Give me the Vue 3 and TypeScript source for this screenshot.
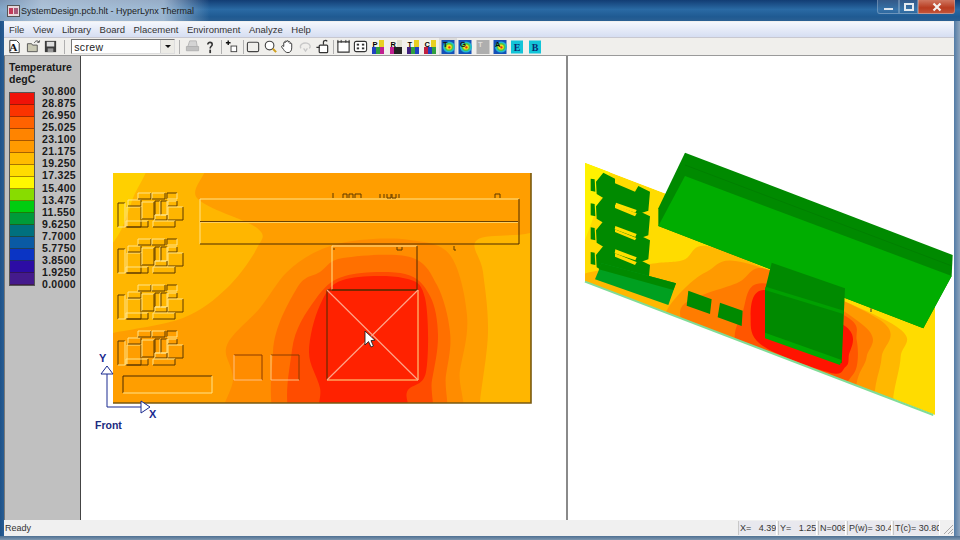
<template>
  <div class="window">
    <div class="titlebar">
      <div class="glow"></div>
      <svg class="app-icon" width="13" height="12" viewBox="0 0 13 12">
        <rect x="0.5" y="0.5" width="12" height="11" fill="#e8d8dc" stroke="#555" />
        <rect x="2" y="3" width="4" height="6" fill="#c23a5a" />
        <rect x="7" y="3" width="4" height="6" fill="#a85a7a" />
      </svg>
      <span class="title-text">SystemDesign.pcb.hlt - HyperLynx Thermal</span>
      <div class="win-buttons">
        <div class="win-btn min"><i></i></div>
        <div class="win-btn max"><i></i></div>
        <div class="win-btn close">
          <svg width="12" height="10" viewBox="0 0 12 10">
            <path d="M2.5 1.5 L9.5 8.5 M9.5 1.5 L2.5 8.5" stroke="#f4f0ee" stroke-width="2.2" />
          </svg>
        </div>
      </div>
    </div>

    <div class="client">
      <div class="menubar">
        <span v-for="m in menus" :key="m">{{ m }}</span>
      </div>

      <div class="toolbar">
        <div class="tb">
          <svg width="15" height="15" viewBox="0 0 16 16">
            <path d="M3 1.5 H10 L13 4.5 V14.5 H3 Z" fill="#fff" stroke="#333" />
            <text x="2.5" y="13" class="tb-letter">A</text>
          </svg>
        </div>
        <div class="tb gap-left">
          <svg width="15" height="15" viewBox="0 0 16 16">
            <path d="M1.5 13.5 V5 H6 L7 6.5 H12 V13.5 Z" fill="#c9c9b4" stroke="#555" />
            <path d="M9 4 C10 1.5 13 1.5 14 3.5 M14 3.5 L14.5 1.5 M14 3.5 L12 3.5" fill="none" stroke="#444" />
          </svg>
        </div>
        <div class="tb">
          <svg width="15" height="15" viewBox="0 0 16 16">
            <rect x="2" y="2" width="12" height="12" fill="#3c3c3c" />
            <rect x="4" y="3" width="8" height="5" fill="#ddd" />
            <rect x="5" y="10" width="6" height="4" fill="#999" />
          </svg>
        </div>
        <div class="sep first"></div>
        <div class="combo">
          <span>screw</span>
          <div class="combo-arrow"><i></i></div>
        </div>
        <div class="sep second"></div>
        <div class="tb">
          <svg width="15" height="15" viewBox="0 0 16 16">
            <path d="M5 2 H12 L13 8 H3 Z" fill="#d4d4d4" stroke="#b4b4b4" />
            <path d="M1.5 8 H14.5 V12.5 H1.5 Z" fill="#c0c0c0" stroke="#b0b0b0" />
          </svg>
        </div>
        <div class="tb">
          <svg width="14" height="14" viewBox="0 0 16 16">
            <path d="M5.5 5 C5.5 2 10.5 2 10.5 5 C10.5 7.2 8.2 7.2 8.2 9.6" fill="none" stroke="#333" stroke-width="1.8" />
            <path d="M8.2 11 V15" stroke="#333" stroke-width="2" />
          </svg>
        </div>
        <div class="sep third"></div>
        <div class="tb">
          <svg width="15" height="15" viewBox="0 0 16 16">
            <path d="M2 4 H7 M4.5 1.5 V6.5" stroke="#111" stroke-width="1.5" />
            <rect x="7.5" y="7.5" width="6" height="6" fill="#fff" stroke="#444" />
          </svg>
        </div>
        <div class="sep fourth"></div>
        <div class="tb">
          <svg width="15" height="15" viewBox="0 0 16 16">
            <rect x="1.5" y="3.5" width="12" height="10" rx="1.5" fill="none" stroke="#444" stroke-width="1.2" />
          </svg>
        </div>
        <div class="tb">
          <svg width="15" height="15" viewBox="0 0 16 16">
            <circle cx="7" cy="7" r="4.6" fill="#fff" stroke="#444" stroke-width="1.2" />
            <path d="M10.5 10.5 L14 14" stroke="#d0a020" stroke-width="2.2" />
          </svg>
        </div>
        <div class="tb">
          <svg width="15" height="15" viewBox="0 0 16 16">
            <path d="M4 8 V4 C4 3 5.5 3 5.5 4 V2.8 C5.5 1.7 7.2 1.7 7.2 2.8 V2.5 C7.2 1.5 9 1.5 9 2.6 V3.4 C9 2.4 10.7 2.4 10.7 3.5 V5 C10.7 4 12.5 4.2 12.5 5.2 V9.5 C12.5 12.5 11 14.5 8.5 14.5 C6 14.5 5 13 3.8 11.2 L1.8 8.6 C1.2 7.6 2.6 6.6 3.4 7.5 Z" fill="#fff" stroke="#333" />
          </svg>
        </div>
        <div class="tb">
          <svg width="15" height="15" viewBox="0 0 16 16">
            <path d="M3 10 C1 6 6 3.5 9.5 4.5 C13 5.5 14 8.5 12 10" fill="none" stroke="#c8c8c8" stroke-width="1.4" />
            <path d="M6 10 L8 13 L10 10" fill="none" stroke="#c8c8c8" stroke-width="1.4" />
          </svg>
        </div>
        <div class="tb">
          <svg width="15" height="15" viewBox="0 0 16 16">
            <rect x="4.5" y="6.5" width="9" height="8" rx="1" fill="#fff" stroke="#333" stroke-width="1.3" />
            <path d="M1.5 9 H5 M9 6 V3 C9 1.5 12 1 13 2.5" fill="none" stroke="#333" stroke-width="1.3" />
          </svg>
        </div>
        <div class="sep fifth"></div>
        <div class="tb">
          <svg width="15" height="15" viewBox="0 0 16 16">
            <path d="M2 3 H14 V14 H2 Z" fill="#fff" stroke="#333" stroke-width="1.2" />
            <path d="M2 1 V4 M5.5 1 V4 M10.5 1 V4 M14 1 V4" stroke="#333" />
          </svg>
        </div>
        <div class="tb">
          <svg width="15" height="15" viewBox="0 0 16 16">
            <rect x="1.5" y="2.5" width="13" height="11" rx="2" fill="#fff" stroke="#333" stroke-width="1.2" />
            <rect x="4" y="5" width="2.5" height="2" fill="#333" />
            <rect x="9.5" y="5" width="2.5" height="2" fill="#333" />
            <rect x="4" y="9" width="2.5" height="2" fill="#333" />
            <rect x="9.5" y="9" width="2.5" height="2" fill="#333" />
          </svg>
        </div>
        <div v-for="b in gridButtons" :key="b.letter" class="tb">
          <svg width="16" height="16" viewBox="0 0 16 16">
            <rect x="2" y="1" width="7" height="7" fill="#f4f4e8" />
            <rect x="9" y="1" width="5" height="7" :fill="b.c1" />
            <rect x="2" y="8" width="4" height="7" :fill="b.c2" />
            <rect x="6" y="8" width="4" height="7" :fill="b.c3" />
            <rect x="10" y="8" width="4" height="7" :fill="b.c4" />
            <text x="2.5" y="8" class="tb-mini">{{ b.letter }}</text>
          </svg>
        </div>
        <div v-for="b in contourButtons" :key="b.letter" class="tb" :class="{ pressed: b.letter === 'T' }">
          <svg width="16" height="16" viewBox="0 0 16 16">
            <rect x="1.5" y="1" width="13" height="14" :fill="b.off ? '#aeaeae' : '#1450b8'" />
            <template v-if="!b.off">
              <ellipse cx="9" cy="8" rx="6" ry="5.6" fill="#22b8d0" />
              <ellipse cx="9" cy="8" rx="4.4" ry="4" fill="#50c840" />
              <ellipse cx="9" cy="8" rx="2.8" ry="2.6" fill="#f4e020" />
              <ellipse cx="9.4" cy="8.4" rx="1.2" ry="1.1" fill="#e83010" />
            </template>
            <text x="3" y="8" class="tb-mini" :fill="b.off ? '#ddd' : '#111'">{{ b.letter }}</text>
          </svg>
        </div>
        <div v-for="l in ['E', 'B']" :key="l" class="tb">
          <svg width="16" height="16" viewBox="0 0 16 16">
            <rect x="2" y="1.5" width="12" height="13" fill="#12c4d8" />
            <text x="8" y="12" text-anchor="middle" class="tb-serif">{{ l }}</text>
          </svg>
        </div>
      </div>

      <div class="main">
        <aside class="legend">
          <div class="legend-title">Temperature<br />degC</div>
          <div class="legend-body">
            <div class="scale">
              <div v-for="c in scaleColors" :key="c" class="cell" :style="{ background: c }"></div>
            </div>
            <div class="values">
              <span v-for="v in scaleValues" :key="v">{{ v }}</span>
            </div>
          </div>
        </aside>

        <div class="pane">
          <svg class="view" viewBox="81 56 485 463" width="485" height="463">
            <defs>
              <clipPath id="boardClip"><rect x="113" y="173" width="418" height="230" /></clipPath>
            </defs>
            <g clip-path="url(#boardClip)">
              <rect x="113" y="173" width="418" height="230" fill="#ff9e00" />
              <path v-for="b in frontBands" :key="b.color" :d="smooth(b.pts)" :fill="b.color" />
            </g>
            <path d="M531 173 V403 H113" fill="none" stroke="#7a5a10" stroke-width="1.6" />

            <g v-for="dy in [0, 46, 92, 138]" :key="dy" :transform="`translate(0 ${dy})`">
              <g v-for="(r, i) in stubRects" :key="i">
                <polyline :points="edgeA(r)" fill="none" :stroke="r.mode === 'dark' ? '#5a3800' : '#ffe48a'" />
                <polyline :points="edgeB(r)" fill="none" :stroke="r.mode === 'dark' ? '#ffe48a' : '#5a3800'" />
              </g>
            </g>

            <g v-for="(r, i) in partRects" :key="'p' + i">
              <polyline :points="edgeA(r)" fill="none" :stroke="r.mode === 'dark' ? '#4a2a00' : '#ffe48a'" />
              <polyline :points="edgeB(r)" fill="none" :stroke="r.mode === 'dark' ? '#ffe48a' : '#4a2a00'" />
            </g>
            <path d="M200 221.5 H518" stroke="#6a4000" />
            <path d="M200 222.5 H518" stroke="#ffd060" />
            <path d="M234 355 H262 V380 M271 355 H299 V380" fill="none" stroke="#8a3a00" />
            <path d="M234 355 V380 H262 M271 355 V380 H299" fill="none" stroke="#ffc080" />
            <path d="M327 290 L418 380 M418 290 L327 380" stroke="#ffa488" stroke-width="1.2" />

            <path v-for="(m, i) in pinMarks" :key="'m' + i" :d="m" fill="none" stroke="#5a3800" />

            <g class="axis">
              <path d="M107 374 V407 H141" fill="none" stroke="#1a2a90" />
              <path d="M107 366 L101 374 H113 Z" fill="#fff" stroke="#1a2a90" />
              <path d="M141 401 L150 407 L141 413 Z" fill="#fff" stroke="#1a2a90" />
              <text x="99" y="362" class="axis-label">Y</text>
              <text x="149" y="418" class="axis-label">X</text>
              <text x="95" y="429" class="axis-front">Front</text>
            </g>

            <path d="M365 331 V345 L368.5 341.6 L371 347 L373.4 346 L371 340.6 L375 340.2 Z" fill="#fff" stroke="#222" stroke-width="0.9" />
          </svg>
        </div>

        <div class="splitter"></div>

        <div class="pane right">
          <svg class="view" viewBox="568 56 386 463" width="386" height="463">
            <defs>
              <clipPath id="isoClip"><polygon :points="z(boardPts)" /></clipPath>
            </defs>
            <g clip-path="url(#isoClip)">
              <polygon :points="z(boardPts)" fill="#ffdc00" />
              <polygon :points="z([[45, 68], [120, 95], [60, 260], [45, 300]])" fill="#fff200" />
              <path v-for="b in isoBands" :key="b.color" :d="smooth(zp(b.pts))" :fill="b.color" />
            </g>
            <polyline :points="z([[45, 425], [1090, 825]])" fill="none" stroke="#80dc98" stroke-width="2" />

            <g v-for="dy in [0, 74, 146, 220]" :key="'c' + dy" :transform="`translate(0 ${dy / 3})`">
              <polygon :points="z([[62, 116], [74, 118], [76, 155], [62, 152]])" fill="#008a00" />
              <polygon :points="z(stubBlock)" fill="#008a00" />
            </g>
            <polygon v-for="(s, i) in yellowSlots" :key="'y' + i" :points="z(s)" fill="#ffe000" />

            <polygon :points="z([[95, 370], [318, 430], [295, 495], [75, 418]])" fill="#00a020" />
            <polygon :points="z([[95, 370], [318, 430], [310, 450], [86, 388]])" fill="#008a00" />
            <polygon :points="z([[355, 452], [425, 478], [420, 522], [350, 497]])" fill="#008a00" />
            <polygon :points="z([[450, 488], [518, 512], [515, 558], [443, 532]])" fill="#008a00" />

            <polygon :points="z([[345, 38], [1148, 345], [1145, 408], [1060, 565], [265, 258], [265, 205]])" fill="#008a00" />
            <polygon :points="z([[345, 108], [1145, 408], [1060, 565], [265, 258]])" fill="#00ad00" />
            <polyline :points="z([[345, 75], [1146, 378]])" fill="none" stroke="#008000" />

            <polygon :points="z([[605, 368], [825, 445], [815, 670], [585, 580], [585, 450]])" fill="#008a00" />
            <polygon :points="z([[585, 578], [815, 660], [810, 675], [585, 595]])" fill="#00a800" />
            <polygon :points="z([[587, 440], [822, 512], [820, 522], [585, 450]])" fill="#00a000" />
            <polyline :points="z([[903, 505], [903, 516]])" fill="none" stroke="#333" />
          </svg>
        </div>
      </div>

      <div class="statusbar">
        <span class="ready">Ready</span>
        <div class="cells">
          <div v-for="s in statusCells" :key="s.text" class="cell-s" :style="{ width: s.w + 'px' }">{{ s.text }}</div>
          <svg class="grip" width="13" height="13" viewBox="0 0 13 13">
            <path d="M12 3 L3 12 M12 7 L7 12 M12 10 L10 12" stroke="#a8a8a8" />
          </svg>
        </div>
      </div>
    </div>
    <div class="frame-bottom"></div>
  </div>
</template>

<script setup lang="ts">
type Pt = [number, number]

interface PartRect {
  x: number
  y: number
  w: number
  h: number
  mode: 'light' | 'dark'
}

const menus = ['File', 'View', 'Library', 'Board', 'Placement', 'Environment', 'Analyze', 'Help']

const gridButtons = [
  { letter: 'P', c1: '#e8d020', c2: '#2040c0', c3: '#30a040', c4: '#c02090' },
  { letter: 'R', c1: '#e0e0d0', c2: '#c02090', c3: '#222', c4: '#222' },
  { letter: 'T', c1: '#e8d020', c2: '#402080', c3: '#30a040', c4: '#2040c0' },
  { letter: 'C', c1: '#e8d020', c2: '#c02040', c3: '#2040c0', c4: '#30a040' }
]

const contourButtons = [
  { letter: 'T', off: false },
  { letter: 'G', off: false },
  { letter: 'T ', off: true },
  { letter: 'A', off: false }
]

const scaleColors = [
  '#f01208', '#fb3300', '#ff6200', '#ff8400', '#ff9a00', '#ffbc00', '#ffdc00', '#fff800',
  '#88dc00', '#00cc10', '#009a3a', '#00707e', '#0a5aa4', '#0a34c4', '#2c0ca4', '#441a8c'
]

const scaleValues = [
  '30.800', '28.875', '26.950', '25.025', '23.100', '21.175', '19.250', '17.325', '15.400',
  '13.475', '11.550', '9.6250', '7.7000', '5.7750', '3.8500', '1.9250', '0.0000'
]

const statusCells = [
  { text: 'X=   4.39', w: 39 },
  { text: 'Y=   1.25', w: 39 },
  { text: 'N=008', w: 28 },
  { text: 'P(w)= 30.4', w: 45 },
  { text: 'T(c)= 30.80', w: 47 }
]

// contour bands of the front view, in page coordinates, painted back to front
const frontBands: { color: string; pts: Pt[] }[] = [
  { color: '#ffb600', pts: [[90, 150], [200, 160], [197, 198], [257, 228], [257, 248], [227, 288], [183, 318], [113, 333], [85, 340]] },
  { color: '#ffd000', pts: [[95, 150], [146, 160], [133, 198], [120, 232], [100, 255], [85, 240]] },
  { color: '#ffb600', pts: [[570, 215], [530, 233], [477, 240], [483, 272], [488, 332], [480, 402], [478, 440], [570, 440]] },
  { color: '#ff8c00', pts: [[236, 440], [233, 378], [227, 345], [260, 308], [287, 272], [320, 250], [360, 240], [410, 240], [450, 255], [467, 315], [460, 370], [443, 440]] },
  { color: '#ff7000', pts: [[290, 440], [273, 352], [297, 288], [320, 272], [343, 258], [410, 257], [437, 285], [450, 332], [446, 375], [432, 440]] },
  { color: '#ff4c00', pts: [[300, 430], [292, 350], [315, 300], [345, 276], [405, 274], [430, 296], [438, 335], [432, 380], [420, 430]] },
  { color: '#ff2200', pts: [[325, 425], [320, 388], [309, 352], [320, 305], [343, 280], [403, 278], [425, 298], [426, 372], [407, 392], [405, 425]] }
]

const stubRects: PartRect[] = [
  { x: 118, y: 203, w: 7, h: 24, mode: 'dark' },
  { x: 127, y: 207, w: 14, h: 20, mode: 'light' },
  { x: 126, y: 221, w: 22, h: 6, mode: 'light' },
  { x: 128, y: 200, w: 13, h: 6, mode: 'light' },
  { x: 138, y: 193, w: 13, h: 6, mode: 'light' },
  { x: 142, y: 202, w: 12, h: 17, mode: 'light' },
  { x: 152, y: 193, w: 13, h: 6, mode: 'light' },
  { x: 167, y: 193, w: 10, h: 6, mode: 'dark' },
  { x: 155, y: 201, w: 5, h: 14, mode: 'dark' },
  { x: 161, y: 201, w: 6, h: 14, mode: 'dark' },
  { x: 168, y: 201, w: 9, h: 5, mode: 'light' },
  { x: 168, y: 207, w: 15, h: 13, mode: 'light' },
  { x: 155, y: 215, w: 12, h: 5, mode: 'light' },
  { x: 153, y: 221, w: 22, h: 6, mode: 'light' }
]

const partRects: PartRect[] = [
  { x: 200, y: 199, w: 319, h: 45, mode: 'light' },
  { x: 123, y: 376, w: 89, h: 17, mode: 'dark' },
  { x: 332, y: 246, w: 85, h: 44, mode: 'light' },
  { x: 327, y: 290, w: 91, h: 90, mode: 'dark' }
]

const pinMarks = [
  'M333 198 V193', 'M343 198 V194 H347 V198', 'M349 198 V194 H353 V198', 'M355 198 V194 H361 V198',
  'M380 194 V198 M384 194 V198', 'M387 194 V198 H391 V194', 'M392 194 V198 H396 V194 M399 194 V198',
  'M495 198 V194 H500 V198', 'M334 248 V250', 'M397 247 V250 H402 V247', 'M454 246 V250 H456'
]

const boardPts: Pt[] = [[45, 68], [1095, 470], [1095, 825], [45, 425]]

const isoBands: { color: string; pts: Pt[] }[] = [
  { color: '#ffb800', pts: [[20, 410], [240, 372], [340, 360], [410, 318], [620, 400], [980, 560], [992, 650], [970, 770], [960, 900], [20, 500]] },
  { color: '#ff9a00', pts: [[280, 540], [320, 470], [410, 395], [530, 370], [930, 540], [935, 650], [915, 750], [900, 920], [280, 640]] },
  { color: '#ff7c00', pts: [[335, 560], [345, 490], [500, 430], [600, 390], [885, 560], [890, 650], [860, 730], [840, 920], [335, 640]] },
  { color: '#ff5600', pts: [[515, 640], [520, 510], [580, 430], [830, 530], [860, 600], [860, 680], [830, 730], [790, 800]] },
  { color: '#ff1400', pts: [[542, 545], [585, 450], [828, 560], [836, 650], [825, 682], [780, 698], [585, 622]] }
]

const stubBlock: Pt[] = [
  [100, 98], [135, 116], [135, 130], [195, 155], [205, 138], [240, 155], [235, 212], [205, 222], [130, 192], [80, 162], [78, 125]
]

const yellowSlots: Pt[][] = [
  [[138, 188], [200, 210], [196, 218], [136, 197]],
  [[136, 258], [200, 282], [196, 291], [134, 268]],
  [[136, 328], [200, 352], [196, 361], [134, 340]]
]

const z = (pts: Pt[]) => pts.map(([x, y]) => `${570 + x / 3},${140 + y / 3}`).join(' ')
const zp = (pts: Pt[]): Pt[] => pts.map(([x, y]) => [570 + x / 3, 140 + y / 3])

const edgeA = (r: PartRect) => `${r.x},${r.y + r.h} ${r.x},${r.y} ${r.x + r.w},${r.y}`
const edgeB = (r: PartRect) => `${r.x + r.w},${r.y} ${r.x + r.w},${r.y + r.h} ${r.x},${r.y + r.h}`

// closed catmull-rom curve through the points
const smooth = (pts: Pt[]) => {
  const n = pts.length
  let d = `M${pts[0][0]} ${pts[0][1]}`
  for (let i = 0; i < n; i++) {
    const p0 = pts[(i - 1 + n) % n]
    const p1 = pts[i]
    const p2 = pts[(i + 1) % n]
    const p3 = pts[(i + 2) % n]
    const c1x = p1[0] + (p2[0] - p0[0]) / 6
    const c1y = p1[1] + (p2[1] - p0[1]) / 6
    const c2x = p2[0] - (p3[0] - p1[0]) / 6
    const c2y = p2[1] - (p3[1] - p1[1]) / 6
    d += ` C${c1x} ${c1y} ${c2x} ${c2y} ${p2[0]} ${p2[1]}`
  }
  return d + ' Z'
}
</script>

<style>
html, body {
  margin: 0;
  overflow: hidden;
  background: #24598f;
}
</style>

<style scoped>
.window {
  width: 960px;
  height: 540px;
  display: flex;
  flex-direction: column;
  overflow: hidden;
  background: linear-gradient(90deg, #1f5288 0, #2a6097 5px, #2a6097 950px, #8ea4bc 960px);
  font-family: "Liberation Sans", Arial, sans-serif;
}

.titlebar {
  height: 21px;
  flex: none;
  position: relative;
  display: flex;
  align-items: center;
  padding-left: 7px;
  box-sizing: border-box;
  background: linear-gradient(#123d74, #2a6aa4 45%, #1f5a92 80%, #2a5f92);
}

.glow {
  position: absolute;
  left: 0;
  top: 0;
  width: 210px;
  height: 21px;
  background: linear-gradient(90deg, rgba(205, 218, 232, 0.55), rgba(205, 218, 232, 0.8) 20%, rgba(205, 218, 232, 0.7) 78%, rgba(200, 215, 230, 0));
}

.app-icon {
  position: relative;
  flex: none;
}

.title-text {
  position: relative;
  margin-left: 1px;
  font-size: 9px;
  color: #222;
  white-space: nowrap;
}

.win-buttons {
  position: absolute;
  right: 5px;
  top: 0;
  display: flex;
  height: 14px;
}

.win-btn {
  height: 14px;
  box-sizing: border-box;
  display: flex;
  align-items: center;
  justify-content: center;
  border: 1px solid rgba(190, 205, 222, 0.35);
  border-top: none;
  background: linear-gradient(rgba(255, 255, 255, 0.14), rgba(255, 255, 255, 0.04));
}

.win-btn.min {
  width: 22px;
  border-radius: 0 0 0 3px;
}

.win-btn.min i {
  display: block;
  width: 9px;
  height: 2px;
  margin-top: 5px;
  background: #dfe6ee;
}

.win-btn.max {
  width: 19px;
}

.win-btn.max i {
  display: block;
  width: 6px;
  height: 4px;
  border: 2px solid #e4eaf0;
}

.win-btn.close {
  width: 37px;
  border-radius: 0 0 3px 0;
  background: linear-gradient(#cf7660, #b83c20 60%, #c25238);
}

.client {
  flex: 1;
  min-height: 0;
  margin: 0 6px 0 4px;
  display: flex;
  flex-direction: column;
  background: #f0f0f0;
}

.menubar {
  height: 15px;
  flex: none;
  display: flex;
  align-items: center;
  gap: 8.6px;
  padding-left: 5px;
  box-sizing: border-box;
  background: linear-gradient(#f4f7fd, #d6def2);
  font-size: 9.5px;
  color: #333;
  margin-top: 1px;
}

.toolbar {
  height: 18px;
  flex: none;
  display: flex;
  align-items: center;
  padding-left: 2px;
  box-sizing: border-box;
  background: #f0efec;
  border-top: 1px solid #c8c8d0;
}

.tb {
  width: 17.4px;
  height: 17px;
  flex: none;
  display: flex;
  align-items: center;
  justify-content: center;
}

.tb.gap-left {
  margin-left: 1px;
}

.tb.pressed {
  background: #dcdcdc;
}

.tb-letter {
  font: bold 12px "Liberation Serif", serif;
  fill: #111;
}

.tb-mini {
  font: bold 7.5px "Liberation Sans", sans-serif;
}

.tb-serif {
  font: bold 10px "Liberation Serif", serif;
  fill: #0a2a70;
}

.sep {
  width: 1px;
  height: 14px;
  flex: none;
  background: #b0b0b0;
}

.sep.first {
  margin: 0 6px 0 5px;
}

.sep.second {
  margin: 0 4px;
}

.sep.third {
  margin: 0 1px 0 2px;
}

.sep.fourth {
  margin: 0 0 0 3px;
}

.sep.fifth {
  margin: 0 0.5px 0 2px;
}

.combo {
  width: 104px;
  height: 15px;
  flex: none;
  box-sizing: border-box;
  display: flex;
  align-items: center;
  justify-content: space-between;
  background: #fff;
  border: 1px solid #8a8a8a;
  border-color: #777 #ddd #ddd #777;
  font-size: 10.5px;
  letter-spacing: 0.4px;
  color: #222;
  padding-left: 2px;
}

.combo-arrow {
  width: 13px;
  height: 13px;
  background: #ecebe6;
  border-left: 1px solid #ccc;
  display: flex;
  align-items: center;
  justify-content: center;
}

.combo-arrow i {
  display: block;
  border-left: 3px solid transparent;
  border-right: 3px solid transparent;
  border-top: 3px solid #111;
}

.main {
  flex: 1;
  min-height: 0;
  display: flex;
  border-top: 1px solid #9a9a9a;
}

.legend {
  width: 77px;
  flex: none;
  box-sizing: border-box;
  background: #c0c0c0;
  border-right: 1px solid #444;
  border-left: 1px solid #777;
  padding: 5px 0 0 4px;
  color: #1a1a1a;
  font-weight: bold;
  font-size: 10.5px;
}

.legend-title {
  line-height: 12px;
}

.legend-body {
  display: flex;
  gap: 7px;
}

.scale {
  width: 26px;
  margin-top: 7px;
  align-self: flex-start;
  display: flex;
  flex-direction: column;
  border: 1px solid #555;
  box-sizing: border-box;
}

.cell {
  height: 12px;
  box-sizing: border-box;
  border-bottom: 1px solid rgba(60, 30, 0, 0.45);
}

.values {
  display: flex;
  flex-direction: column;
  font-size: 10.5px;
  line-height: 12.06px;
  letter-spacing: 0.3px;
}

.pane {
  width: 485px;
  flex: none;
  background: #fff;
  overflow: hidden;
}

.pane.right {
  width: 386px;
}

.view {
  display: block;
}

.axis-label {
  font: bold 11px "Liberation Sans", sans-serif;
  fill: #1a2a90;
}

.axis-front {
  font: bold 10.5px "Liberation Sans", sans-serif;
  fill: #1a2a80;
}

.splitter {
  width: 2px;
  flex: none;
  background: #8a8a8a;
}

.statusbar {
  height: 16px;
  flex: none;
  display: flex;
  align-items: center;
  justify-content: space-between;
  background: #f0f0f0;
  font-size: 9px;
  color: #333;
}

.ready {
  padding-left: 1px;
}

.cells {
  display: flex;
  align-items: center;
  gap: 1px;
}

.cell-s {
  height: 14px;
  line-height: 14px;
  box-sizing: border-box;
  padding-left: 1px;
  overflow: hidden;
  white-space: pre;
  background: #e8e8ee;
  border-left: 1px solid #c8c8c8;
  border-right: 1px solid #fff;
}

.frame-bottom {
  height: 4px;
  flex: none;
  background: linear-gradient(#4d6f92, #7f98b0);
}
</style>
